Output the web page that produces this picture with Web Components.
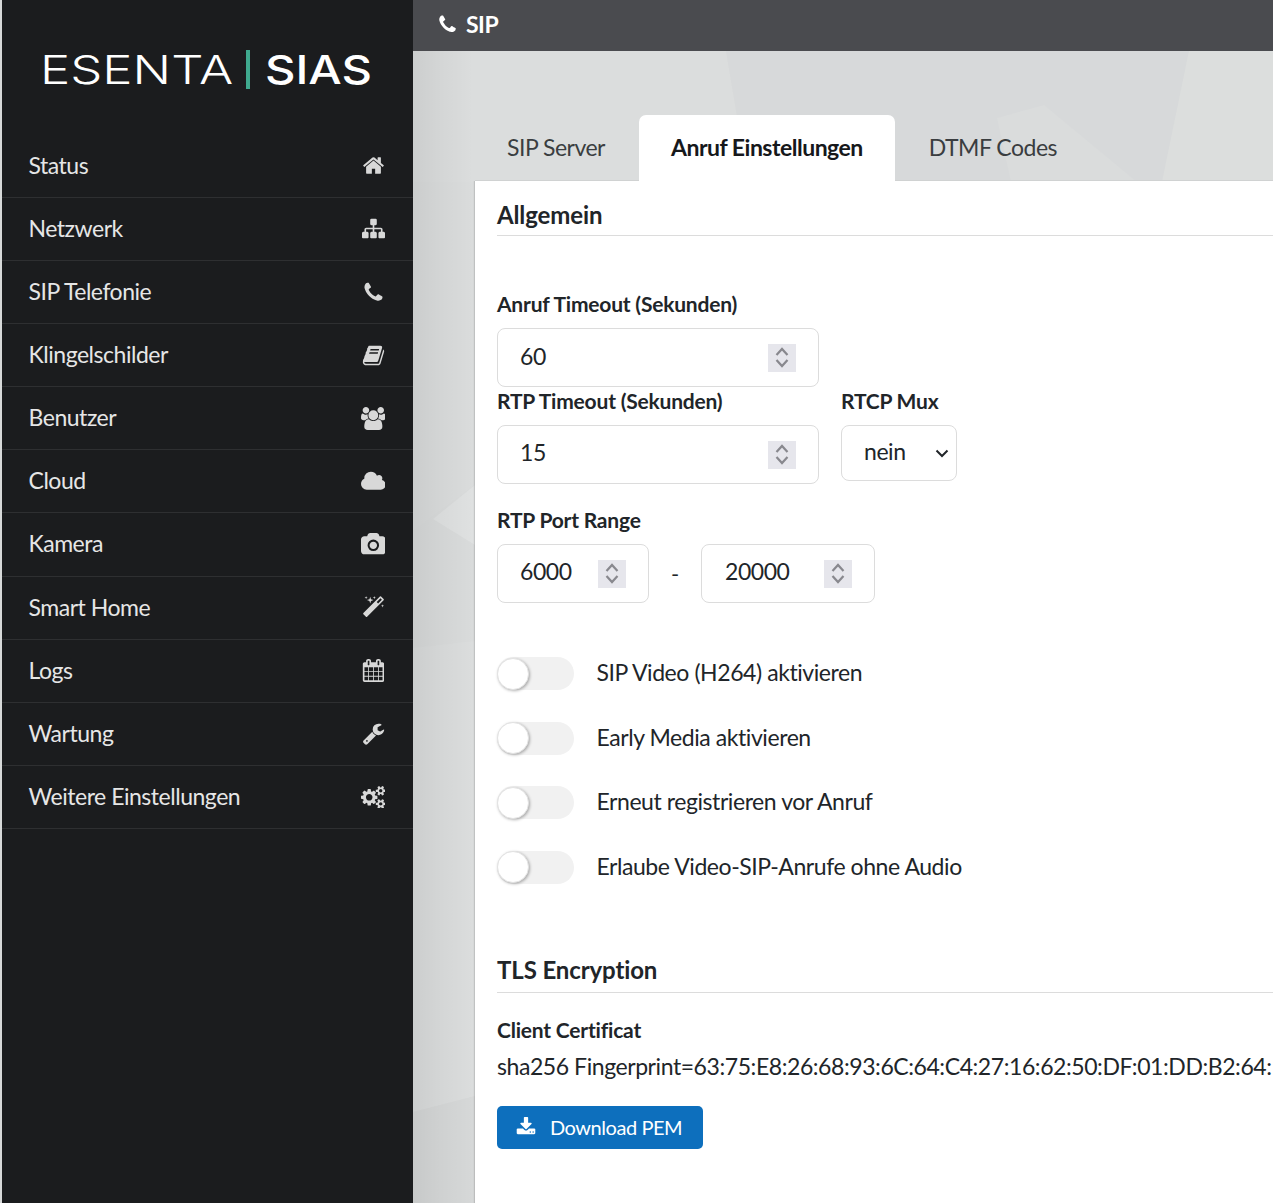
<!DOCTYPE html>
<html lang="de">
<head>
<meta charset="utf-8">
<title>SIP</title>
<style>
  html, body { margin: 0; height: 100%; overflow: hidden; background: #d9dbdb; }
  body { font-family: Lato, "Noto Sans", sans-serif; color: #212529; }
</style>
</head>
<body>
<app-shell>
  <side-bar slot="side">
    <nav-item label="Status" icon="home"></nav-item>
    <nav-item label="Netzwerk" icon="sitemap"></nav-item>
    <nav-item label="SIP Telefonie" icon="phone"></nav-item>
    <nav-item label="Klingelschilder" icon="book"></nav-item>
    <nav-item label="Benutzer" icon="users"></nav-item>
    <nav-item label="Cloud" icon="cloud"></nav-item>
    <nav-item label="Kamera" icon="camera"></nav-item>
    <nav-item label="Smart Home" icon="magic"></nav-item>
    <nav-item label="Logs" icon="calendar"></nav-item>
    <nav-item label="Wartung" icon="wrench"></nav-item>
    <nav-item label="Weitere Einstellungen" icon="cogs"></nav-item>
  </side-bar>
  <top-bar slot="top" label="SIP" icon="phone"></top-bar>
  <tab-bar slot="tabs">
    <tab-link>SIP Server</tab-link>
    <tab-link active>Anruf Einstellungen</tab-link>
    <tab-link>DTMF Codes</tab-link>
  </tab-bar>
  <settings-card slot="card">
    <section-head style="padding-top:19px;height:55px">Allgemein</section-head>
    <field-row style="margin-top:55px">
      <form-field label="Anruf Timeout (Sekunden)"><num-input value="60" style="width:322px"></num-input></form-field>
    </field-row>
    <field-row style="margin-top:1px">
      <form-field label="RTP Timeout (Sekunden)"><num-input value="15" style="width:322px;--ty:-5px"></num-input></form-field>
      <form-field label="RTCP Mux"><select-box value="nein"></select-box></form-field>
    </field-row>
    <field-row style="margin-top:23px">
      <form-field label="RTP Port Range">
        <range-pair>
          <num-input value="6000" style="width:152px;--ty:-5px"></num-input>
          <span>-</span>
          <num-input value="20000" style="width:174px;--pl:23px;--ty:-5px"></num-input>
        </range-pair>
      </form-field>
    </field-row>
    <toggle-list style="margin-top:54px">
      <toggle-row>SIP Video (H264) aktivieren</toggle-row>
      <toggle-row>Early Media aktivieren</toggle-row>
      <toggle-row>Erneut registrieren vor Anruf</toggle-row>
      <toggle-row>Erlaube Video-SIP-Anrufe ohne Audio</toggle-row>
    </toggle-list>
    <section-head style="margin-top:54px;padding-top:17px">TLS Encryption</section-head>
    <cert-block label="Client Certificat" fingerprint="sha256 Fingerprint=63:75:E8:26:68:93:6C:64:C4:27:16:62:50:DF:01:DD:B2:64:"></cert-block>
    <blue-button icon="download">Download PEM</blue-button>
  </settings-card>
</app-shell>

<script>
// fontawesome 4 shapes, name -> [viewBox width, path]
const ICONS = {
  home: [1792, 'M1472 992v480q0 26-19 45t-45 19h-384v-384h-256v384h-384q-26 0-45-19t-19-45v-480q0-1 .5-3t.5-3l575-474 575 474q1 2 1 6zm223-69l-62 74q-8 9-21 11h-3q-13 0-21-7l-692-577-692 577q-12 8-24 7-13-2-21-11l-62-74q-8-10-7-23.5t11-21.5l719-599q32-26 76-26t76 26l244 204v-195q0-14 9-23t23-9h192q14 0 23 9t9 23v408l219 182q10 8 11 21.5t-7 23.5z'],
  sitemap: [1792, 'M1792 1248v320q0 40-28 68t-68 28h-320q-40 0-68-28t-28-68v-320q0-40 28-68t68-28h96v-192h-512v192h96q40 0 68 28t28 68v320q0 40-28 68t-68 28h-320q-40 0-68-28t-28-68v-320q0-40 28-68t68-28h96v-192h-512v192h96q40 0 68 28t28 68v320q0 40-28 68t-68 28h-320q-40 0-68-28t-28-68v-320q0-40 28-68t68-28h96v-192q0-52 38-90t90-38h512v-192h-96q-40 0-68-28t-28-68v-320q0-40 28-68t68-28h320q40 0 68 28t28 68v320q0 40-28 68t-68 28h-96v192h512q52 0 90 38t38 90v192h96q40 0 68 28t28 68z'],
  phone: [1792, 'M1600 1240q0 27-10 70.5t-21 68.5q-21 50-122 106-94 51-186 51-27 0-53-3.5t-57.5-12.5-47-14.5-55.5-20.5-49-18q-98-35-175-83-127-79-264-216t-216-264q-48-77-83-175-3-9-18-49t-20.5-55.5-14.5-47-12.5-57.5-3.5-53q0-92 51-186 56-101 106-122 25-11 68.5-21t70.5-10q14 0 21 3 18 6 53 76 11 19 30 54t35 63.5 31 53.5q3 4 17.5 25t21.5 35.5 7 28.5q0 20-28.5 50t-62 55-62 53-28.5 46q0 9 5 22.5t8.5 20.5 14 24 11.5 19q76 137 174 235t235 174q2 1 19 11.5t24 14 20.5 8.5 22.5 5q18 0 46-28.5t53-62 55-62 50-28.5q14 0 28.5 7t35.5 21.5 25 17.5q25 15 53.5 31t63.5 35 54 30q70 35 76 53 3 7 3 21z'],
  book: [1792, 'M1703 478q40 57 18 129l-275 906q-19 64-76.5 107.5t-122.5 43.5h-923q-77 0-148.5-53.5t-99.5-131.5q-24-67-2-127 0-4 3-27t4-37q1-8-3-21.5t-3-19.5q2-11 8-21t16.5-23.5 16.5-23.5q23-38 45-91.5t30-91.5q3-10 .5-30t-.5-28q3-11 17-28t17-23q21-36 42-92t25-90q1-9-2.5-32t.5-28q4-13 22-30.5t22-22.5q19-26 42.5-84.5t27.5-96.5q1-8-3-25.5t-2-26.5q2-8 9-18t18-23 17-21q8-12 16.5-30.5t15-35 16-36 19.5-32 26.5-23.5 36-11.5 47.5 5.5l-1 3q38-9 51-9h761q74 0 114 56t18 130l-274 906q-36 119-71.5 153.5t-128.5 34.5h-869q-27 0-38 15-11 16-1 43 24 70 144 70h923q29 0 56-15.5t35-41.5l300-987q7-22 5-57 38 15 59 43zm-1064 2q-4 13 2 22.5t20 9.5h608q13 0 25.5-9.5t16.5-22.5l21-64q4-13-2-22.5t-20-9.5h-608q-13 0-25.5 9.5t-16.5 22.5zm-83 256q-4 13 2 22.5t20 9.5h608q13 0 25.5-9.5t16.5-22.5l21-64q4-13-2-22.5t-20-9.5h-608q-13 0-25.5 9.5t-16.5 22.5z'],
  users: [1920, 'M593 896q-162 5-265 128h-134q-82 0-138-40.5t-56-118.5q0-353 124-353 6 0 43.5 21t97.5 42.5 119 21.5q67 0 133-23-5 37-5 66 0 139 81 256zm1071 637q0 120-73 189.5t-194 69.5h-874q-121 0-194-69.5t-73-189.5q0-53 3.5-103.5t14-109 26.5-108.5 43-97.5 62-81 85.5-53.5 111.5-20q10 0 43 21.5t73 48 107 48 135 21.5 135-21.5 107-48 73-48 43-21.5q61 0 111.5 20t85.5 53.5 62 81 43 97.5 26.5 108.5 14 109 3.5 103.5zm-1024-1277q0 106-75 181t-181 75-181-75-75-181 75-181 181-75 181 75 75 181zm704 384q0 159-112.5 271.5t-271.5 112.5-271.5-112.5-112.5-271.5 112.5-271.5 271.5-112.5 271.5 112.5 112.5 271.5zm576 225q0 78-56 118.5t-138 40.5h-134q-103-123-265-128 81-117 81-256 0-29-5-66 66 23 133 23 59 0 119-21.5t97.5-42.5 43.5-21q124 0 124 353zm-128-609q0 106-75 181t-181 75-181-75-75-181 75-181 181-75 181 75 75 181z'],
  cloud: [1920, 'M1920 1152q0 159-112.5 271.5t-271.5 112.5h-1088q-185 0-316.5-131.5t-131.5-316.5q0-132 71-241.5t187-163.5q-2-28-2-43 0-212 150-362t362-150q158 0 286.5 88t187.5 230q70-62 166-62 106 0 181 75t75 181q0 75-41 138 129 30 213 134.5t84 239.5z'],
  camera: [1920, 'M960 672q119 0 203.5 84.5t84.5 203.5-84.5 203.5-203.5 84.5-203.5-84.5-84.5-203.5 84.5-203.5 203.5-84.5zm704-416q106 0 181 75t75 181v896q0 106-75 181t-181 75h-1408q-106 0-181-75t-75-181v-896q0-106 75-181t181-75h224l51-136q19-49 69.5-84.5t103.5-35.5h512q53 0 103.5 35.5t69.5 84.5l51 136h224zm-704 1152q185 0 316.5-131.5t131.5-316.5-131.5-316.5-316.5-131.5-316.5 131.5-131.5 316.5 131.5 316.5 316.5 131.5z'],
  magic: [1792, 'M1254 581l293-293-107-107-293 293zm447-293q0 27-18 45l-1286 1286q-18 18-45 18t-45-18l-198-198q-18-18-18-45t18-45l1286-1286q18-18 45-18t45 18l198 198q18 18 18 45zm-1351-190l98 30-98 30-30 98-30-98-98-30 98-30 30-98zm350 162l196 60-196 60-60 196-60-196-196-60 196-60 60-196zm930 478l98 30-98 30-30 98-30-98-98-30 98-30 30-98zm-640-640l98 30-98 30-30 98-30-98-98-30 98-30 30-98z'],
  calendar: [1664, 'M192 1664h288v-288h-288v288zm352 0h320v-288h-320v288zm-352-352h288v-320h-288v320zm352 0h320v-320h-320v320zm-352-384h288v-288h-288v288zm736 736h320v-288h-320v288zm-384-736h320v-288h-320v288zm768 736h288v-288h-288v288zm-384-352h320v-320h-320v320zm-352-864v-288q0-13-9.5-22.5t-22.5-9.5h-64q-13 0-22.5 9.5t-9.5 22.5v288q0 13 9.5 22.5t22.5 9.5h64q13 0 22.5-9.5t9.5-22.5zm736 864h288v-320h-288v320zm-384-384h320v-288h-320v288zm384 0h288v-288h-288v288zm32-480v-288q0-13-9.5-22.5t-22.5-9.5h-64q-13 0-22.5 9.5t-9.5 22.5v288q0 13 9.5 22.5t22.5 9.5h64q13 0 22.5-9.5t9.5-22.5zm384-64v1280q0 52-38 90t-90 38h-1408q-52 0-90-38t-38-90v-1280q0-52 38-90t90-38h128v-96q0-66 47-113t113-47h64q66 0 113 47t47 113v96h384v-96q0-66 47-113t113-47h64q66 0 113 47t47 113v96h128q52 0 90 38t38 90z'],
  wrench: [1792, 'M448 1472q0-26-19-45t-45-19-45 19-19 45 19 45 45 19 45-19 19-45zm644-420l-682 682q-37 37-90 37-52 0-91-37l-106-108q-38-36-38-90 0-53 38-91l681-681q39 98 114.5 173.5t173.5 114.5zm634-435q0 39-23 106-47 134-164.5 217.5t-258.5 83.5q-185 0-316.5-131.5t-131.5-316.5 131.5-316.5 316.5-131.5q58 0 121.5 16.5t107.5 46.5q16 11 16 28t-16 28l-293 169v224l193 107q5-3 79-48.5t135.5-81 70.5-35.5q15 0 23.5 10t8.5 25z'],
  cogs: [1920, 'M896 960q0-106-75-181t-181-75-181 75-75 181 75 181 181 75 181-75 75-181zm768 512q0-52-38-90t-90-38-90 38-38 90q0 53 37.5 90.5t90.5 37.5 90.5-37.5 37.5-90.5zm0-1024q0-52-38-90t-90-38-90 38-38 90q0 53 37.5 90.5t90.5 37.5 90.5-37.5 37.5-90.5zm-384 421v185q0 10-7 19.5t-16 10.5l-155 24q-11 35-32 76 34 48 90 115 7 11 7 20 0 12-7 19-23 30-82.5 89.5t-78.5 59.5q-11 0-21-7l-115-90q-37 19-77 31-11 108-23 155-7 24-30 24h-186q-11 0-20-7.5t-10-17.5l-23-153q-34-10-75-31l-118 89q-7 7-20 7-11 0-21-8-144-133-144-160 0-9 7-19 10-14 41-53t47-61q-23-44-35-82l-152-24q-10-1-17-9.5t-7-19.5v-185q0-10 7-19.5t16-10.5l155-24q11-35 32-76-34-48-90-115-7-11-7-20 0-12 7-20 22-30 82-89t79-59q11 0 21 7l115 90q34-18 77-32 11-108 23-154 7-24 30-24h186q11 0 20 7.5t10 17.5l23 153q34 10 75 31l118-89q8-7 20-7 11 0 21 8 144 133 144 160 0 8-7 19-12 16-42 54t-45 60q23 48 34 82l152 23q10 2 17 10.5t7 19.5zm640 533v140q0 16-149 31-12 27-30 52 51 113 51 138 0 4-4 7-122 71-124 71-8 0-46-47t-52-68q-20 2-30 2t-30-2q-14 21-52 68t-46 47q-2 0-124-71-4-3-4-7 0-25 51-138-18-25-30-52-149-15-149-31v-140q0-16 149-31 13-29 30-52-51-113-51-138 0-4 4-7 4-2 35-20t59-34 30-16q8 0 46 46.5t52 67.5q20-2 30-2t30 2q51-71 92-112l6-2q4 0 124 70 4 3 4 7 0 25-51 138 17 23 30 52 149 15 149 31zm0-1024v140q0 16-149 31-12 27-30 52 51 113 51 138 0 4-4 7-122 71-124 71-8 0-46-47t-52-68q-20 2-30 2t-30-2q-14 21-52 68t-46 47q-2 0-124-71-4-3-4-7 0-25 51-138-18-25-30-52-149-15-149-31v-140q0-16 149-31 13-29 30-52-51-113-51-138 0-4 4-7 4-2 35-20t59-34 30-16q8 0 46 46.5t52 67.5q20-2 30-2t30 2q51-71 92-112l6-2q4 0 124 70 4 3 4 7 0 25-51 138 17 23 30 52 149 15 149 31z'],
  download: [1792, 'M1344 1344q0-26-19-45t-45-19-45 19-19 45 19 45 45 19 45-19 19-45zm256 0q0-26-19-45t-45-19-45 19-19 45 19 45 45 19 45-19 19-45zm128-224v320q0 40-28 68t-68 28h-1472q-40 0-68-28t-28-68v-320q0-40 28-68t68-28h465l135 136q58 56 136 56t136-56l136-136h464q40 0 68 28t28 68zm-325-569q17 41-14 70l-448 448q-18 19-45 19t-45-19l-448-448q-31-29-14-70 17-39 59-39h256v-448q0-26 19-45t45-19h256q26 0 45 19t19 45v448h256q42 0 59 39z']
};

function iconSvg(name, size) {
  const [w, d] = ICONS[name];
  return `<svg width="${size * w / 1792}" height="${size}" viewBox="0 0 ${w} 1792" fill="currentColor" aria-hidden="true"><path d="${d}"/></svg>`;
}

function define(tag, css, html) {
  customElements.define(tag, class extends HTMLElement {
    connectedCallback() {
      if (this.shadowRoot) return;
      this.attachShadow({ mode: 'open' });
      const attrs = name => this.getAttribute(name) || '';
      this.shadowRoot.innerHTML = `<style>${css}</style>${html(attrs)}`;
    }
  });
}

define('app-shell', `
  :host { display: grid; grid-template-columns: 411px 860px; grid-template-rows: 51px 64px 66px 1fr;
    height: 1203px; width: 1273px; padding-left: 2px; box-sizing: border-box; overflow: hidden; background: #d7d9d9; }
  .side { grid-row: 1 / 5; }
  .top { grid-column: 2; }
  .tabs { grid-column: 2; grid-row: 3; padding-left: 62px; position: relative; }
  .tabs::after { content: ""; position: absolute; left: 62px; right: 0; bottom: 0; height: 1px; background: #d0d2d2; }
  .tabs ::slotted(*) { position: relative; z-index: 1; }
  .card { grid-column: 2; grid-row: 4; padding-left: 62px; min-width: 0; overflow: hidden; position: relative; }
  .bg { grid-column: 2; grid-row: 2 / 5; position: relative; }
  .bg svg { position: absolute; inset: 0; width: 100%; height: 100%; }
`, () => `
  <div class="side"><slot name="side"></slot></div>
  <div class="top"><slot name="top"></slot></div>
  <div class="bg">
    <svg viewBox="0 0 860 1152" preserveAspectRatio="none" aria-hidden="true">
      <defs><linearGradient id="edge" x1="0" x2="1">
        <stop offset="0" stop-color="#000" stop-opacity=".07"/>
        <stop offset=".03" stop-color="#000" stop-opacity=".035"/>
        <stop offset=".07" stop-color="#000" stop-opacity="0"/>
      </linearGradient></defs>
      <rect width="860" height="1152" fill="#d9dbdb"/>
      <polygon points="0,0 313,0 335,131 0,131" fill="#dbdddd"/>
      <polygon points="313,0 776,0 749,131 335,131" fill="#d7d9da"/>
      <polygon points="776,0 860,0 860,131 749,131" fill="#dcdedd"/>
      <polygon points="631,54 724,131 598,131 584,67" fill="#dadcdc"/>
      <polygon points="0,131 62,131 62,434 0,480" fill="#dadcdc"/>
      <polygon points="20,468 62,434 62,494" fill="#dfe1e1"/>
      <polygon points="0,597 62,590 62,1045 0,1061" fill="#dbdddd"/>
      <polygon points="0,1061 62,1045 62,1152 0,1152" fill="#d6d8d8"/>
      <rect width="860" height="1152" fill="url(#edge)"/>
    </svg>
  </div>
  <div class="tabs"><slot name="tabs"></slot></div>
  <div class="card"><slot name="card"></slot></div>
`);

define('side-bar', `
  :host { display: block; background: #1b1c1e; height: 100%; color: #e8e8e8; }
  .logo { height: 134.85px; box-sizing: border-box; display: flex; align-items: flex-start; padding: 50px 0 0 38px; color: #fff; }
  .word { display: block; font: 300 40px/40px Inter, sans-serif; transform-origin: 0 50%; white-space: nowrap; }
  .e { width: 192px; transform: scaleX(1.27); }
  .s { width: 107px; font-weight: 500; transform: scaleX(1.18); }
  .bar { width: 4px; height: 39px; background: #3fa98e; margin: 0 15px 0 14px; flex: none; }
`, () => `
  <div class="logo">
    <span class="word e">ESENTA</span><span class="bar"></span><span class="word s">SIAS</span>
  </div>
  <slot></slot>
`);

define('nav-item', `
  :host { display: flex; align-items: center; justify-content: space-between; height: 62.1px; padding: 0 25px 0 26.5px;
    border-bottom: 1px solid #2e2f31; font-size: 23px; letter-spacing: -.47px; color: #e6e6e6; }
  .txt { margin-top: -2px; }
  .ico { width: 30px; display: flex; justify-content: center; color: #d8d8d8; }
  svg { display: block; }
`, a => `<span class="txt">${a('label')}</span><span class="ico">${iconSvg(a('icon'), 23)}</span>`);

define('top-bar', `
  :host { display: flex; align-items: center; gap: 8px; height: 51px; padding: 0 0 3px 24px; box-sizing: border-box;
    background: #4a4b4f; color: #fff; font-size: 23px; letter-spacing: -.5px; font-weight: 700; }
  svg { display: block; }
`, a => `${iconSvg(a('icon'), 21)}<span>${a('label')}</span>`);

define('tab-bar', `:host { display: flex; gap: 2px; height: 66px; }`, () => `<slot></slot>`);

define('tab-link', `
  :host { display: flex; align-items: center; padding: 0 32px 2px; height: 66px; box-sizing: border-box;
    font-size: 23px; letter-spacing: -.5px; color: #3a3d40; border-radius: 7px 7px 0 0; }
  :host([active]) { background: #fff; color: #16181b; font-weight: 700; }
`, () => `<slot></slot>`);

define('settings-card', `
  :host { display: block; background: #fff; height: 100%; padding: 0 0 0 22px; box-sizing: border-box; box-shadow: -1px 0 1px rgba(0,0,0,.12); }
`, () => `<slot></slot>`);

define('section-head', `
  :host { display: block; font-size: 24px; letter-spacing: -.12px; font-weight: 700; color: #212529; height: 55px; line-height: 30px; padding-top: 19px; box-sizing: border-box; border-bottom: 1px solid #dcdcdc; }
`, () => `<slot></slot>`);

define('field-row', `:host { display: flex; gap: 22px; }`, () => `<slot></slot>`);

define('form-field', `
  :host { display: block; }
  label { display: block; font-size: 21px; letter-spacing: -.2px; font-weight: 700; color: #212529; line-height: 26px; margin-bottom: 11px; }
`, a => `<label>${a('label')}</label><slot></slot>`);

define('num-input', `
  :host { display: flex; align-items: center; justify-content: space-between; height: 59px; box-sizing: border-box;
    border: 1px solid #dcdcdc; border-radius: 8px; background: #fff; padding: 0 22px 0 var(--pl, 22px); font-size: 23px; letter-spacing: -.45px; color: #212529; }
  .spin { width: 28px; height: 28px; background: #e6e6ec; display: block; flex: none; margin-top: 1px; }
  span { line-height: 28px; margin-top: var(--ty, -4px); }
`, a => `<span>${a('value')}</span><svg class="spin" viewBox="0 0 28 28" fill="none" stroke="#88888e" stroke-width="2.2"><path d="M8.5 11l5.5-6 5.5 6M8.5 16l5.5 6 5.5-6"/></svg>`);

define('select-box', `
  :host { display: flex; align-items: center; justify-content: space-between; width: 116px; height: 56px; box-sizing: border-box;
    border: 1px solid #dcdcdc; border-radius: 8px; background: #fff; padding: 0 7px 0 22px; font-size: 23px; letter-spacing: -.45px; color: #212529; }
  span { margin-top: -4px; }
  svg { display: block; }
`, a => `<span>${a('value')}</span><svg width="14" height="14" viewBox="0 0 14 14" fill="none" stroke="#212529" stroke-width="2"><path d="M1.5 4.5l5.5 5.5 5.5-5.5"/></svg>`);

define('range-pair', `
  :host { display: flex; align-items: center; font-size: 22px; color: #212529; }
  ::slotted(span) { width: 52px; text-align: center; }
`, () => `<slot></slot>`);

define('toggle-list', `:host { display: flex; flex-direction: column; gap: 31.67px; }`, () => `<slot></slot>`);

define('toggle-row', `
  :host { display: flex; align-items: center; height: 33px; font-size: 23px; letter-spacing: -.43px; color: #212529; }
  .track { position: relative; width: 77px; height: 33px; border-radius: 17px; background: #f1f1f1; margin-right: 23px; flex: none; }
  .knob { position: absolute; left: 0; top: 0.5px; width: 30px; height: 30px; border-radius: 50%; background: #fff; border: 1px solid #e3e3e3;
    box-shadow: 1px 1px 3px rgba(0,0,0,.3); }
  .t { margin-top: -3px; margin-left: -.5px; }
`, () => `<span class="track"><span class="knob"></span></span><span class="t"><slot></slot></span>`);

define('cert-block', `
  :host { display: block; margin-top: 24px; white-space: nowrap; }
  b { display: block; font-size: 21px; letter-spacing: -.2px; font-weight: 700; line-height: 26px; color: #212529; }
  p { margin: 9px 0 0; font-size: 23px; letter-spacing: -.43px; line-height: 28px; color: #212529; }
`, a => `<b>${a('label')}</b><p>${a('fingerprint')}</p>`);

define('blue-button', `
  :host { display: inline-flex; align-items: center; height: 43px; margin-top: 26px; padding: 0 21px 0 19px; box-sizing: border-box;
    background: #0d6fbd; color: #fff; border-radius: 5px; font-size: 20px; letter-spacing: -.45px; font-weight: 400; gap: 14px; }
  svg { display: block; }
`, a => `${iconSvg(a('icon'), 20)}<slot></slot>`);
</script>
</body>
</html>
